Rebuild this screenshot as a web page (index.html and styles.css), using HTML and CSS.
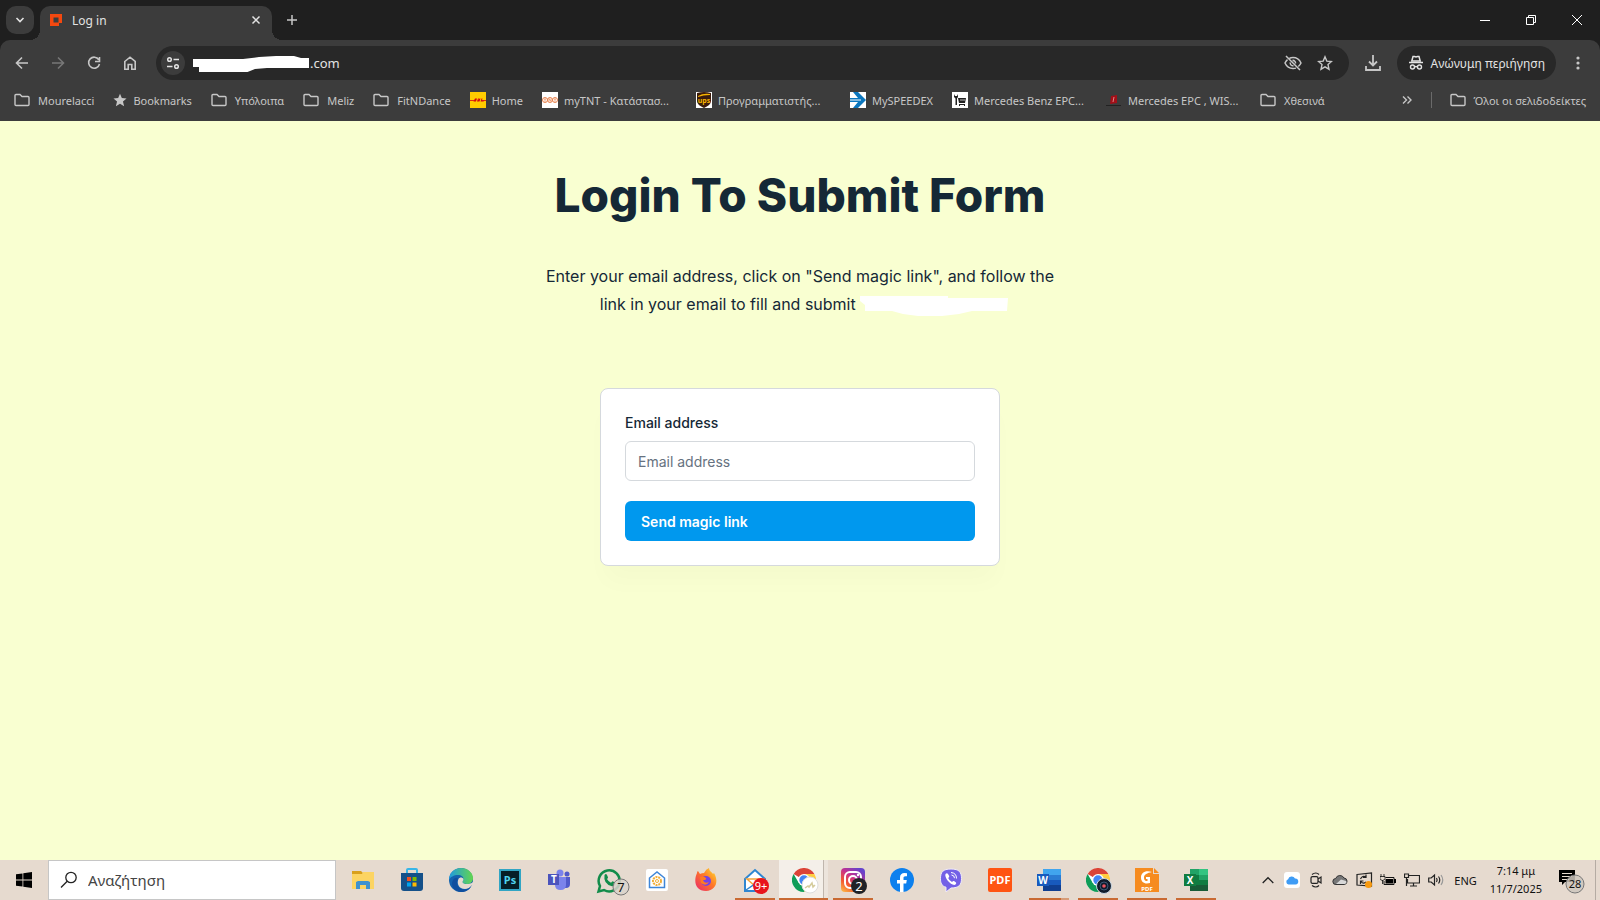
FILE: index.html
```html
<!DOCTYPE html>
<html lang="el">
<head>
  <meta charset="utf-8">
  <title>Log in</title>
  <link rel="stylesheet" href="styles.css">
</head>
<body>
  <svg class="defs" width="0" height="0">
    <symbol id="folder" viewBox="0 0 16 16">
      <path d="M1 3.500a1 1 0 0 1 1-1h4l2 2h6a1 1 0 0 1 1 1v7a1 1 0 0 1-1 1H2a1 1 0 0 1-1-1z" fill="none" stroke="#c7c7c7" stroke-width="1.400"/>
    </symbol>
    <symbol id="chrome" viewBox="0 0 24 24">
      <circle cx="12" cy="12" r="12" fill="#fff"/>
      <path d="M12 12 1.600 6A12 12 0 0 1 22.400 6z" fill="#db4437"/>
      <path d="M12 6h10.400A12 12 0 0 1 12 24l5.200-9z" fill="#ffcd40"/>
      <path d="M1.600 6A12 12 0 0 0 12 24l5.200-9H6.800z" fill="#0f9d58"/>
      <circle cx="12" cy="12" r="6" fill="#fff"/>
      <circle cx="12" cy="12" r="4.700" fill="#4285f4"/>
    </symbol>
  </svg>

  <header class="browser">
    <div class="tab-strip">
      <button class="tab-search" aria-label="Search tabs">
        <svg width="10" height="10" viewBox="0 0 10 10"><path d="M1.500 3 5 6.500 8.500 3" fill="none" stroke="#e3e3e3" stroke-width="1.600"/></svg>
      </button>
      <div class="tab">
        <svg width="12" height="12" viewBox="0 0 12 12"><path d="M0 0h12v9h-3v3H0zM3.500 3.500v5h5v-5z" fill="#f4480f" fill-rule="evenodd"/></svg>
        <span class="tab-title">Log in</span>
        <button class="icon-btn" aria-label="Close tab">
          <svg width="10" height="10" viewBox="0 0 10 10"><path d="m1.500 1.500 7 7m0-7-7 7" stroke="#e3e3e3" stroke-width="1.500"/></svg>
        </button>
      </div>
      <button class="icon-btn new-tab" aria-label="New tab">
        <svg width="12" height="12" viewBox="0 0 12 12"><path d="M6 1v10M1 6h10" stroke="#c7c7c7" stroke-width="1.500"/></svg>
      </button>
      <div class="window-controls">
        <button class="win-btn" aria-label="Minimize"><svg width="10" height="10"><path d="M0 5.500h10" stroke="#fff"/></svg></button>
        <button class="win-btn" aria-label="Restore"><svg width="10" height="10"><path d="M.5 2.500h7v7h-7zM2.500 2.500v-2h7v7h-2" fill="none" stroke="#fff"/></svg></button>
        <button class="win-btn" aria-label="Close"><svg width="10" height="10"><path d="m0 0 10 10M10 0 0 10" stroke="#fff"/></svg></button>
      </div>
    </div>

    <div class="toolbar">
      <button class="nav-btn" aria-label="Back"><svg width="14" height="14" viewBox="0 0 14 14"><path d="M13 7H2m5-5.500L1.500 7 7 12.500" fill="none" stroke="#c7c7c7" stroke-width="1.600"/></svg></button>
      <button class="nav-btn" aria-label="Forward"><svg width="14" height="14" viewBox="0 0 14 14"><path d="M1 7h11M7 1.500 12.500 7 7 12.500" fill="none" stroke="#777" stroke-width="1.600"/></svg></button>
      <button class="nav-btn" aria-label="Reload"><svg width="14" height="14" viewBox="0 0 14 14"><path d="M11.800 3.700A5.500 5.500 0 1 0 12.500 8M12.500 1v4.500H8" fill="none" stroke="#c7c7c7" stroke-width="1.600"/></svg></button>
      <button class="nav-btn" aria-label="Home"><svg width="14" height="14" viewBox="0 0 14 14"><path d="M1.800 5.500 7 1.200l5.200 4.300v7.700H8.800V8.500H5.200v4.700H1.800z" fill="none" stroke="#c7c7c7" stroke-width="1.600"/></svg></button>
      <div class="omnibox">
        <button class="site-info" aria-label="Site information">
          <svg width="14" height="14" viewBox="0 0 14 14" fill="none" stroke="#e3e3e3" stroke-width="1.500"><circle cx="3.500" cy="3.500" r="1.800"/><path d="M7.500 3.500H13M1 10.500h5.500"/><circle cx="10.500" cy="10.500" r="1.800"/></svg>
        </button>
        <svg class="url-mask" width="117" height="18" viewBox="0 0 117 18"><path d="M0 5h50l16-2 17-1h18l7 2h8v10H74l-12 1-10 4H6v-6H0z" fill="#fff"/></svg>
        <input class="url" type="text" value=".com" aria-label="Address">
        <button class="icon-btn" aria-label="Third-party cookies blocked">
          <svg width="20" height="20" viewBox="0 0 20 20" fill="none" stroke="#c7c7c7" stroke-width="1.500"><path d="M6.500 5.200C7.600 4.700 8.700 4.500 10 4.500c3.600 0 6.400 2 8 5.500a10 10 0 0 1-2.700 3.500M13 15.100a9 9 0 0 1-3 .4c-3.600 0-6.400-2-8-5.500a9.500 9.500 0 0 1 2.500-3.400M3 3l14 14M12.500 10.500A2.700 2.700 0 0 0 9.500 7.400M7.300 9.500a2.700 2.700 0 0 0 3.200 3.200"/></svg>
        </button>
        <button class="icon-btn" aria-label="Bookmark this tab">
          <svg width="16" height="16" viewBox="0 0 16 16"><path d="m8 1.800 1.800 4.300 4.700.4-3.500 3.100 1 4.600-4-2.400-4 2.400 1-4.600-3.500-3.100 4.700-.4z" fill="none" stroke="#c7c7c7" stroke-width="1.400"/></svg>
        </button>
      </div>
      <button class="icon-btn download" aria-label="Downloads">
        <svg width="16" height="16" viewBox="0 0 16 16"><path d="M8 0v10M4 6.500l4 4 4-4M1 11v4h14v-4" fill="none" stroke="#c7c7c7" stroke-width="1.800"/></svg>
      </button>
      <button class="incognito">
        <svg width="16" height="16" viewBox="0 0 16 16"><path d="M3.800 6 5 1.500h1.500L8 2l1.500-.5H11L12.200 6z" fill="none" stroke="#e3e3e3" stroke-width="1.500"/><path d="M1 7.500h14M6.500 12q1.500-1 3 0" fill="none" stroke="#e3e3e3" stroke-width="1.500"/><circle cx="4.500" cy="12" r="2" fill="none" stroke="#e3e3e3" stroke-width="1.400"/><circle cx="11.500" cy="12" r="2" fill="none" stroke="#e3e3e3" stroke-width="1.400"/></svg>
        <span>Ανώνυμη περιήγηση</span>
      </button>
      <button class="icon-btn menu" aria-label="Menu">
        <svg width="4" height="14" viewBox="0 0 4 14" fill="#c7c7c7"><circle cx="2" cy="2" r="1.600"/><circle cx="2" cy="7" r="1.600"/><circle cx="2" cy="12" r="1.600"/></svg>
      </button>
    </div>

    <nav class="bookmarks">
      <a href="#" class="bookmark folder"><svg width="16" height="16"><use href="#folder"/></svg>Mourelacci</a>
      <a href="#" class="bookmark"><svg width="14" height="14" viewBox="0 0 16 16"><path d="m8 .8 2.100 5 5.400.4-4.100 3.600 1.300 5.300L8 12.300l-4.700 2.800 1.300-5.300L.5 6.200l5.400-.4z" fill="#c7c7c7"/></svg>Bookmarks</a>
      <a href="#" class="bookmark folder"><svg width="16" height="16"><use href="#folder"/></svg>Υπόλοιπα</a>
      <a href="#" class="bookmark folder"><svg width="16" height="16"><use href="#folder"/></svg>Meliz</a>
      <a href="#" class="bookmark folder"><svg width="16" height="16"><use href="#folder"/></svg>FitNDance</a>
      <a href="#" class="bookmark"><svg width="16" height="16"><path d="M0 0h16v16H0z" fill="#fc0"/><path d="M0 8.500h4M12 8.500h4" stroke="#d40511" stroke-width=".8"/><path d="M3.500 9.500 5 6.500h2L6 9.500zM7 9.500l1-3h1L8.500 8l1-1.500h1l-1 3zM10.500 9.500l1-3h1l-.6 2H14l-.4 1z" fill="#d40511"/></svg>Home</a>
      <a href="#" class="bookmark"><svg width="16" height="16"><path d="M0 0h16v16H0z" fill="#fff"/><g fill="none" stroke="#e8834e"><circle cx="3" cy="8" r="2.500"/><circle cx="8" cy="8" r="2.500"/><circle cx="13" cy="8" r="2.500"/><path d="M2 7h2M3 7v3M7 9.500v-3l2 3v-3M12 7h2M13 7v3" stroke-width=".7"/></g></svg><span class="long">myTNT - Κατάστασ...</span></a>
      <a href="#" class="bookmark"><svg width="16" height="16"><path d="M0 0h16v16H0z" fill="#fff"/><path d="M1 1q7-2 14 0v8c0 3-3 5-7 7-4-2-7-4-7-7z" fill="#3b1c0c"/><path d="M2 4q5-3 12-2v1Q7 3 2 5z" fill="#f7b500"/><text x="8" y="11" text-anchor="middle" class="ups-text">ups</text></svg><span class="long">Προγραμματιστής...</span></a>
      <a href="#" class="bookmark"><svg width="16" height="16"><path d="M0 0h16v16H0z" fill="#fff"/><path d="M3 0h5l8 8-8 8H3l5-6H0V6h8z" fill="#0b76bd"/><path d="M0 8h11" stroke="#fff"/></svg>MySPEEDEX</a>
      <a href="#" class="bookmark"><svg width="16" height="16"><path d="M0 0h16v16H0z" fill="#fff"/><path d="M2 2v3l1.500 1.500V13H5V6.500L6 5V2L5 4H3zM6 6h8l-1 5H7zM7 12h6v2h-1v-1H8v1H7z" fill="#222"/><path d="M8 8h5" stroke="#fff" stroke-width=".7"/></svg><span class="long">Mercedes Benz EPC...</span></a>
      <a href="#" class="bookmark"><svg width="16" height="16"><path d="m5 4 6-1v8l-7 1z" fill="#a30f18"/><path d="m8 5-1 5" stroke="#d88"/><path d="M0 13.500h15" stroke="#222"/></svg><span class="long">Mercedes EPC , WIS...</span></a>
      <a href="#" class="bookmark folder"><svg width="16" height="16"><use href="#folder"/></svg>Χθεσινά</a>
      <button class="icon-btn more" aria-label="More bookmarks">
        <svg width="10" height="8" viewBox="0 0 10 8"><path d="m1 .5 3.500 3.500L1 7.500M5.500.5 9 4 5.500 7.500" fill="none" stroke="#c7c7c7" stroke-width="1.400"/></svg>
      </button>
      <a href="#" class="bookmark folder all"><svg width="16" height="16"><use href="#folder"/></svg>Όλοι οι σελιδοδείκτες</a>
    </nav>
  </header>

  <main class="page">
    <h1>Login To Submit Form</h1>
    <p class="intro">Enter your email address, click on "Send magic link", and follow the link in your email to fill and submit <svg class="name-mask" width="140" height="20"><path d="M0 0h88v2h60l-1 13h-35l-13 3-17 2H58l-15-2-11-3H5V9L0 5z" fill="#fff"/></svg></p>
    <form class="card">
      <label for="email">Email address</label>
      <input id="email" type="email" placeholder="Email address">
      <button type="submit" class="submit">Send magic link</button>
    </form>
  </main>

  <footer class="taskbar">
    <button class="start" aria-label="Start"><svg width="16" height="16"><path d="M0 2.300 6.500 1.400v6.200H0zM7.300 1.300 16 0v7.600H7.300zM0 8.400h6.500v6.200L0 13.700zM7.300 8.400H16V16l-8.700-1.200z"/></svg></button>
    <div class="search">
      <svg width="18" height="18" viewBox="0 0 18 18"><circle cx="11" cy="6.500" r="5.200" fill="none" stroke="#222" stroke-width="1.300"/><path d="M7.200 10.300 1 16.500" stroke="#222" stroke-width="1.300"/></svg>
      <input type="search" placeholder="Αναζήτηση" aria-label="Αναζήτηση">
    </div>

    <div class="apps">
      <button class="app" aria-label="File Explorer"><svg width="24" height="24"><path d="M1 3h9l2 2v3H1z" fill="#d9a01c"/><path d="M1 6h10l1-2h11v17H1z" fill="#fcd462"/><path d="M5 21v-7l2-1h10l2 1v7h-4v-4H9v4z" fill="#3f92cf"/></svg></button>
      <button class="app" aria-label="Microsoft Store"><svg width="24" height="24"><path d="M7 6V2q0-1 1-1h8q1 0 1 1v4" fill="none" stroke="#38b6e8" stroke-width="2"/><path d="M1 5h22v15q0 3-3 3H4q-3 0-3-3z" fill="#155089"/><path d="M7 9h4v4H7z" fill="#f25022"/><path d="M12.500 9h4v4h-4z" fill="#7fba00"/><path d="M7 14.500h4v4H7z" fill="#00a4ef"/><path d="M12.500 14.500h4v4h-4z" fill="#ffb900"/></svg></button>
      <button class="app" aria-label="Edge"><svg width="24" height="24"><defs><linearGradient id="edge-top"><stop offset="0" stop-color="#1f9be0"/><stop offset="1" stop-color="#63d64e"/></linearGradient></defs><circle cx="12" cy="12" r="12" fill="#1462ae"/><path d="M0 12C0 5 5 0 12 0s12 5 12 10c0 4-3 6-6 6-3 0-4.500-1-4.500-2 0-.8 1-1.300 1-3 0-2-2-4-5.500-4C5 7 1 9 0 12z" fill="url(#edge-top)"/><path d="M9.500 11c-2 4 0 10 6.500 10 2.500 0 5-1 6.500-3.500l1.500 0v-3.500c-3 3-10.500 2.500-10.500 0 0-.8 1-1.300 1-3-1-2-4-2-5 0z" fill="#e6dacf"/><path d="M8.500 12c-2 5 2 10 7.500 9.500 3-.3 5-2 6-3.500-1 3.500-5 6-9.500 6C5 24 1 17 4 12c2-3 6-3 4.500 0z" fill="#104f9f"/></svg></button>
      <button class="app" aria-label="Photoshop"><svg width="24" height="24"><path d="M1 1h22v22H1z" fill="#31a5c4"/><path d="M3 3h18v18H3z" fill="#061e26"/><text x="12" y="16" text-anchor="middle" class="ps-text">Ps</text></svg></button>
      <button class="app" aria-label="Teams"><svg width="24" height="24"><circle cx="20" cy="6" r="2.500" fill="#5059c9"/><circle cx="13" cy="5" r="3.500" fill="#7b83eb"/><path d="M17 9h6v7q0 4-4 4h-2z" fill="#5059c9"/><path d="M8 9h11v8q0 5-5.500 5T8 17z" fill="#7b83eb"/><path d="M1 6h11v11H1z" fill="#4b53bc"/><text x="7" y="15" text-anchor="middle" class="app-letter">T</text></svg></button>
      <button class="app" aria-label="WhatsApp"><svg class="badged" width="34" height="28"><path d="M2.500 23.500 4 18A10.500 10.500 0 1 1 8 22z" fill="none" stroke="#128c4a" stroke-width="2.500"/><path d="M8.500 7q1.500-2 2.500 0l1 2.200q0 1-1 1.800 1.300 2.500 4 3.700l1.500-1.500q3 .8 3 2-.5 3-3.500 3Q7 16 8.500 7z" fill="#128c4a"/><circle cx="25" cy="19" r="8" fill="#d8d2cb" fill-opacity=".85" stroke="#777"/><text x="25" y="23.500" text-anchor="middle" class="badge-text dark">7</text></svg></button>
      <button class="app" aria-label="Home app"><svg width="22" height="22"><rect width="22" height="22" rx="2" fill="#fff"/><path d="M3.500 9 11 3l7.500 6v9.500h-15z" fill="none" stroke="#3f86d8" stroke-width="1.500"/><circle cx="11" cy="12" r="4" fill="none" stroke="#f2ae37" stroke-width="2" stroke-dasharray="2 .8"/><circle cx="11" cy="12" r="1.500" fill="none" stroke="#f2ae37"/></svg></button>
      <button class="app" aria-label="Firefox"><svg width="24" height="24"><defs><linearGradient id="fox" x1="1" x2="0" y2="1"><stop offset="0" stop-color="#ffe532"/><stop offset=".45" stop-color="#ff7826"/><stop offset="1" stop-color="#e9256d"/></linearGradient></defs><path d="M3 5c0-1 .5-2 1-2l2 3q2-1 4-1 2-4 5-5c0 3 3 4 4 6l1-1c5 8 2 18-8 18S-1 14 3 5z" fill="url(#fox)"/><circle cx="12" cy="13" r="5" fill="#7542e5"/><path d="M6 9q4-1 6 1 1 2-3 2 1 4 6 2-3 5-8 1z" fill="#ff7a22"/></svg></button>
      <button class="app open" aria-label="Mail"><svg class="badged" width="34" height="28"><path d="M2 11 12 2l10 9v12H2z" fill="#fff" stroke="#2f86d1" stroke-width="2"/><path d="M4 11h16l-8 7z" fill="#fff" stroke="#f2a33a" stroke-width="1.500"/><path d="m3 22 9-6 9 6" fill="none" stroke="#2f86d1" stroke-width="1.500"/><circle cx="18" cy="18" r="8" fill="#e8141c"/><text x="18" y="22" text-anchor="middle" class="badge-text small">9+</text></svg></button>
      <button class="app open current" aria-label="Chrome"><svg class="badged" width="34" height="28"><use href="#chrome" width="24" height="24"/><circle cx="18" cy="17" r="8" fill="#fff" stroke="#ddd"/><path d="m13 20 3-2 1 1 3-4 1 4 2-2" fill="none" stroke="#d5cc9d" stroke-width="1.500"/></svg></button>
      <button class="app open" aria-label="Instagram"><svg class="badged" width="34" height="28"><defs><linearGradient id="insta" x1="0" y1="1" x2=".7" y2="0"><stop offset="0" stop-color="#fdc34a"/><stop offset=".35" stop-color="#f4572f"/><stop offset=".65" stop-color="#c72f8d"/><stop offset="1" stop-color="#6643cc"/></linearGradient></defs><rect width="24" height="24" rx="4" fill="url(#insta)"/><rect x="4" y="4" width="16" height="16" rx="5" fill="none" stroke="#fff" stroke-width="2"/><circle cx="12" cy="12" r="4" fill="none" stroke="#fff" stroke-width="2"/><circle cx="17" cy="7" r="1.200" fill="#fff"/><circle cx="18" cy="18" r="8" fill="#1f2227"/><text x="18" y="22.500" text-anchor="middle" class="badge-text">2</text></svg></button>
      <button class="app" aria-label="Facebook"><svg width="24" height="24"><circle cx="12" cy="12" r="12" fill="#0d80ee"/><path d="M10 24v-8.500H7V12h3V9.500C10 6.500 11.700 5 14.500 5q1.300 0 2.500.2v3h-1.500c-1.500 0-2 .8-2 1.800v2h3.300l-.6 3.500h-2.700V24z" fill="#fff"/></svg></button>
      <button class="app" aria-label="Viber"><svg width="24" height="24"><path d="M12 1c8 0 10.500 3 10.500 9.500S20 20 12 20l-5 4v-4.800C2.500 18 1.500 15 1.500 10.500 1.500 4 4 1 12 1z" fill="#7360e6" stroke="#f0ecf8"/><path d="M6.500 6q1.500-1.500 2.500 0l1.200 2q.3 1-1 2 1 2.800 3.800 4 1.300-1.500 2-1l2 1.500q.8 1-.8 2.300C12 18 5 9.500 6.500 6z" fill="#fff"/><path d="M12 4.500q5.500.5 5.500 6M12.500 7q3 .3 3 3.200" fill="none" stroke="#fff"/></svg></button>
      <button class="app" aria-label="PDF"><svg width="24" height="24"><rect width="24" height="24" rx="2" fill="#ff5412"/><text x="12" y="16" text-anchor="middle" class="pdf-text">PDF</text></svg></button>
      <button class="app open grouped" aria-label="Word"><svg width="24" height="24"><path d="M6 1h18v6H6z" fill="#41a5ee"/><path d="M6 7h18v5H6z" fill="#2b7cd3"/><path d="M6 12h18v5H6z" fill="#185abd"/><path d="M6 17h18v6H6z" fill="#103f91"/><path d="M0 6h12v12H0z" fill="#185abd"/><text x="6" y="15.500" text-anchor="middle" class="app-letter">W</text></svg></button>
      <button class="app open" aria-label="Chrome profile"><svg class="badged" width="34" height="28"><use href="#chrome" width="24" height="24"/><circle cx="18" cy="18" r="7.500" fill="#111c2c" stroke="#c9d5e0"/><circle cx="18" cy="18" r="4" fill="none" stroke="#3e5877"/><circle cx="18" cy="18" r="1.800" fill="#ea5360"/></svg></button>
      <button class="app open" aria-label="Foxit PDF"><svg width="24" height="24"><path d="M0 0h18v6h6v18H0z" fill="#f68b1f"/><path d="M19 0v5h5z" fill="#f68b1f"/><path d="M17 4C10 2 6 5 6 9.500c0 5 4 7 9 5.500V9h-4v2h1.500v2C10 13.500 9 12 9 9.500 9 6.500 12 5 17 4z" fill="#fff"/><text x="12" y="22.500" text-anchor="middle" class="foxit-text">PDF</text></svg></button>
      <button class="app open" aria-label="Excel"><svg width="24" height="24"><path d="M6 1h9v6H6z" fill="#21a366"/><path d="M15 1h9v6h-9z" fill="#33c481"/><path d="M6 7h9v10H6z" fill="#107c41"/><path d="M15 7h9v5h-9z" fill="#21a366"/><path d="M15 12h9v5h-9z" fill="#107c41"/><path d="M6 17h18v6H6z" fill="#185c37"/><path d="M0 6h12v12H0z" fill="#107c41"/><text x="6" y="15.500" text-anchor="middle" class="app-letter">X</text></svg></button>
    </div>

    <div class="tray">
      <button class="tray-btn" aria-label="Show hidden icons"><svg width="12" height="8"><path d="m.7 7 5.300-5.300L11.300 7" fill="none" stroke="#222" stroke-width="1.300"/></svg></button>
      <button class="tray-btn" aria-label="iCloud"><svg width="16" height="16"><rect width="16" height="16" rx="3" fill="#fff"/><path d="M4.500 12.500a2.700 2.700 0 0 1-.4-5.200A3.700 3.700 0 0 1 11 6.500a3 3 0 0 1 .5 6z" fill="#3f9cf5"/></svg></button>
      <button class="tray-btn" aria-label="Meet now"><svg width="12" height="16" fill="none" stroke="#222" stroke-width="1.200"><path d="M2 2.500q4-3 7 0M2 13.500q4 3 7 0"/><rect x="1" y="4.600" width="7" height="6.800" rx="1.500"/><path d="m8 7 3-2v6L8 9"/></svg></button>
      <button class="tray-btn" aria-label="OneDrive"><svg width="16" height="12"><path d="M4 10.500a3 3 0 0 1-.3-6A4.500 4.500 0 0 1 12 4a3.300 3.300 0 0 1 .5 6.500z" fill="#777" stroke="#333"/><path d="m4 10 5-4.500 5 1.500q1.500 2-1.500 3z" fill="#d8d8d8"/></svg></button>
      <button class="tray-btn" aria-label="Updates"><svg width="18" height="18"><path d="M2 3.500 16.500 2v13L2 14z" fill="none" stroke="#222" stroke-width="1.200"/><path d="M5.500 8q2-4 5.500-2M11 3.500v3H8M5.500 13v-3h3M6 10.500q2 3 5 .5" fill="none" stroke="#222" stroke-width="1.200"/><circle cx="13.500" cy="13.500" r="3.500" fill="#f79a10"/></svg></button>
      <button class="tray-btn" aria-label="Battery"><svg width="16" height="12"><path d="M5.500 3.500H14v7H4V7" fill="none" stroke="#111"/><path d="M5.500 5H13v4.500H5.500zM14 5h2v4h-2z"/><path d="M0 2.500h5v2q0 1.500-2.500 2Q0 6 0 4.500zM1 0v3M4 0v3M2.500 6v4" stroke="#111" stroke-width=".8" fill="#e6dacf"/></svg></button>
      <button class="tray-btn" aria-label="Network"><svg width="16" height="14" fill="none" stroke="#222" stroke-width="1.200"><path d="M5 2.500h10.500v7.500H3.500V6M9.500 10v3M6 13h7"/><path d="M.5 1h4v3.500h-4zM2.500 4.500V13"/></svg></button>
      <button class="tray-btn" aria-label="Volume"><svg width="16" height="14" fill="none" stroke="#222" stroke-width="1.200"><path d="M.7 5h2.500L6.500 2v10L3.200 9H.7zM8.500 5q1.300 2 0 4M10.500 3.500q2.500 3.500 0 7"/><path d="M13 2q3.500 5 0 10" stroke="#999"/></svg></button>
      <button class="lang">ENG</button>
      <div class="clock"><span>7:14 μμ</span><span>11/7/2025</span></div>
      <button class="notifications" aria-label="Notifications"><svg width="28" height="28"><path d="M1 4h16v12H7l-3 3v-3H1z"/><path d="M4 7.500h10M4 10.500h10M4 13.500h7" stroke="#e6dacf"/><circle cx="17" cy="18" r="9" fill="#cdc5bd" fill-opacity=".85" stroke="#777"/><text x="17" y="22" text-anchor="middle" class="badge-text dark small">28</text></svg></button>
      <button class="show-desktop" aria-label="Show desktop"></button>
    </div>
  </footer>
</body>
</html>
```
FILE: styles.css
```css
* {
  box-sizing: border-box;
}

body {
  display: flex;
  flex-direction: column;
  min-height: 100vh;
  margin: 0;
  background: #f9ffd1;
  font-family: "Noto Sans", "Open Sans", sans-serif;
  font-size: 12px;
}

button {
  padding: 0;
  border: none;
  background: none;
  color: inherit;
  font: inherit;
  cursor: pointer;
}

svg {
  flex: none;
}

.defs {
  position: absolute;
}

/* browser window */
.browser {
  background: #1f1f1f;
  color: #e3e3e3;
}

.tab-strip {
  display: flex;
  align-items: flex-end;
  height: 40px;
  padding-left: 6px;
}

.tab-search {
  display: grid;
  place-items: center;
  width: 28px;
  height: 28px;
  margin: 0 6px 6px 0;
  border-radius: 10px;
  background: #3c3c3c;
}

.tab {
  position: relative;
  display: flex;
  align-items: center;
  gap: 10px;
  width: 232px;
  height: 34px;
  padding: 0 11px 6px 10px;
  border-radius: 10px 10px 0 0;
  background: #3c3c3c;
}

/* flared feet of the selected tab */
.tab::before,
.tab::after {
  content: "";
  position: absolute;
  bottom: 0;
  width: 10px;
  height: 10px;
}

.tab::before {
  right: 100%;
  background: radial-gradient(circle at 0 0, transparent 10px, #3c3c3c 10px);
}

.tab::after {
  left: 100%;
  background: radial-gradient(circle at 100% 0, transparent 10px, #3c3c3c 10px);
}

.tab-title {
  flex: 1;
}

.icon-btn {
  display: grid;
  place-items: center;
  flex: none;
}

.new-tab {
  width: 40px;
  height: 40px;
}

.window-controls {
  display: flex;
  margin-left: auto;
}

.win-btn {
  display: grid;
  place-items: center;
  width: 46px;
  height: 40px;
}

.toolbar {
  display: flex;
  align-items: center;
  height: 46px;
  padding: 0 14px 0 4px;
  border-radius: 10px 10px 0 0;
  background: #3c3c3c;
}

.nav-btn {
  display: grid;
  place-items: center;
  width: 36px;
  height: 34px;
}

.omnibox {
  display: flex;
  flex: 1;
  align-items: center;
  height: 34px;
  margin-left: 8px;
  padding: 0 16px 0 5px;
  border-radius: 17px;
  background: #282828;
}

.omnibox .icon-btn {
  margin-left: 14px;
}

.site-info {
  display: grid;
  place-items: center;
  width: 24px;
  height: 24px;
  margin-right: 8px;
  border-radius: 50%;
  background: #3c3c3c;
}

.url {
  flex: 1;
  min-width: 0;
  padding: 0;
  border: none;
  outline: none;
  background: none;
  color: #e3e3e3;
  font: inherit;
  font-size: 13px;
}

.download {
  width: 48px;
}

.incognito {
  display: flex;
  align-items: center;
  gap: 7px;
  height: 34px;
  padding: 0 11px;
  border-radius: 17px;
  background: #282828;
}

.menu {
  width: 16px;
  margin-left: 14px;
}

.bookmarks {
  display: flex;
  align-items: center;
  gap: 19px;
  height: 35px;
  padding: 0 14px 7px;
  background: #3c3c3c;
  font-size: 11px;
}

.bookmark {
  display: flex;
  align-items: center;
  gap: 6px;
  color: #c7c7c7;
  text-decoration: none;
  white-space: nowrap;
}

.folder {
  gap: 8px;
}

.long {
  width: 113px;
}

.more {
  margin-left: auto;
}

.all {
  padding-left: 18px;
  border-left: 1px solid #6a6a6a;
}

/* login page */
.page {
  display: flex;
  flex: 1;
  flex-direction: column;
  align-items: center;
  padding: 50px 16px;
  color: #152836;
  font-family: Inter, sans-serif;
}

h1 {
  margin: 0 0 43px;
  font-size: 46px;
  font-weight: 800;
  line-height: 48px;
}

.intro {
  max-width: 512px;
  margin: 0 0 70px;
  font-size: 16px;
  line-height: 28px;
  text-align: center;
}

.name-mask {
  overflow: visible;
  vertical-align: middle;
}

.card {
  display: flex;
  flex-direction: column;
  width: 100%;
  max-width: 400px;
  padding: 24px;
  border: 1px solid #d5d9dd;
  border-radius: 8px;
  background: #fff;
  box-shadow: 0 20px 24px -4px rgba(16, 24, 40, 0.02);
  font-size: 14px;
}

.card label {
  margin-bottom: 8px;
  font-weight: 500;
  line-height: 20px;
}

.card input {
  height: 40px;
  margin-bottom: 20px;
  padding: 0 12px;
  border: 1px solid #d5d9dd;
  border-radius: 6px;
  font: inherit;
}

.card input::placeholder {
  color: #667280;
}

.submit {
  height: 40px;
  padding: 0 16px;
  border-radius: 6px;
  background: #0098ee;
  color: #fff;
  font-weight: 600;
  text-align: left;
}

/* windows taskbar */
.taskbar {
  display: flex;
  height: 40px;
  background: #e6dacf;
  color: #111;
}

.start {
  display: grid;
  place-items: center;
  width: 48px;
}

.search {
  display: flex;
  align-items: center;
  gap: 10px;
  width: 288px;
  padding: 0 11px;
  border: 1px solid #c6c6c6;
  background: #fff;
}

.search input {
  flex: 1;
  min-width: 0;
  padding: 0;
  border: none;
  outline: none;
  font: inherit;
  font-size: 15px;
}

.search input::placeholder {
  color: #444;
}

.apps {
  display: flex;
  padding-left: 2px;
}

.app {
  position: relative;
  display: grid;
  place-items: center;
  width: 49px;
}

.badged {
  margin: 4px 0 0 10px;
}

.open::after {
  content: "";
  position: absolute;
  bottom: 0;
  left: 5px;
  width: 40px;
  height: 2px;
  background: #c96a33;
}

.current {
  background: linear-gradient(90deg, #f4efe9 44px, #bfb6ad 44px 45px, #ece4dc 45px);
}

.current::after {
  left: 0;
  width: 100%;
}

.grouped::after {
  background: linear-gradient(90deg, #c96a33 32px, #d79c77 32px);
}

.tray {
  display: flex;
  align-items: center;
  margin-left: auto;
}

.tray-btn {
  display: grid;
  place-items: center;
  width: 24px;
  height: 40px;
}

.lang,
.clock {
  font-size: 11px;
}

.lang {
  margin: 0 13px 0 6px;
}

.clock {
  display: flex;
  flex-direction: column;
  line-height: 18px;
  text-align: center;
}

.notifications {
  display: grid;
  place-items: center;
  margin: 0 9px 0 16px;
}

.show-desktop {
  width: 5px;
  height: 40px;
  border-left: 1px solid #b5aca3;
}

.badge-text {
  fill: #fff;
  font-size: 13px;
}

.small {
  font-size: 11px;
}

.dark {
  fill: #111;
}

.app-letter {
  fill: #fff;
  font-size: 10px;
  font-weight: 700;
}

.ps-text {
  fill: #4fd3ee;
  font-size: 11px;
  font-weight: 700;
}

.pdf-text {
  fill: #fff;
  font-size: 11px;
  font-weight: 700;
}

.foxit-text {
  fill: #fff;
  font-size: 6px;
  font-weight: 700;
}

.ups-text {
  fill: #f7b500;
  font-size: 7px;
  font-weight: 700;
}
```
